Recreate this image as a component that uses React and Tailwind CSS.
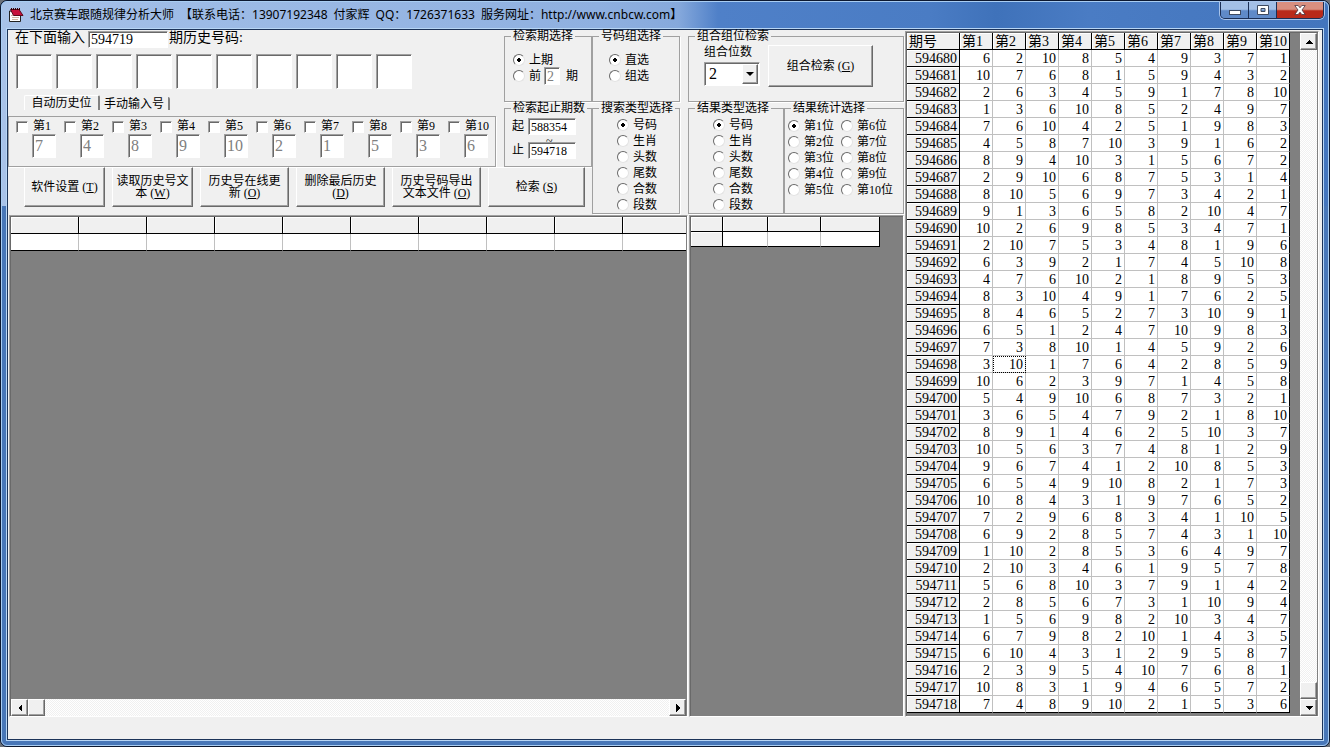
import React from 'react';
import clsx from 'clsx';

const SUNKEN = 'border border-t-[#a0a0a0] border-l-[#a0a0a0] border-r-white border-b-white shadow-[inset_1px_1px_0_#696969]';
const RAISED = 'bg-[#f0f0f0] border border-t-white border-l-white border-r-[#696969] border-b-[#696969] shadow-[inset_-1px_-1px_0_#a0a0a0]';
const TRACK = 'bg-[repeating-conic-gradient(#ffffff_0_25%,#f0f0f0_0_50%)] bg-[length:2px_2px]';

const FIRST_ISSUE = 594680;
const HISTORY = `
6 2 10 8 5 4 9 3 7 1
10 7 6 8 1 5 9 4 3 2
2 6 3 4 5 9 1 7 8 10
1 3 6 10 8 5 2 4 9 7
7 6 10 4 2 5 1 9 8 3
4 5 8 7 10 3 9 1 6 2
8 9 4 10 3 1 5 6 7 2
2 9 10 6 8 7 5 3 1 4
8 10 5 6 9 7 3 4 2 1
9 1 3 6 5 8 2 10 4 7
10 2 6 9 8 5 3 4 7 1
2 10 7 5 3 4 8 1 9 6
6 3 9 2 1 7 4 5 10 8
4 7 6 10 2 1 8 9 5 3
8 3 10 4 9 1 7 6 2 5
8 4 6 5 2 7 3 10 9 1
6 5 1 2 4 7 10 9 8 3
7 3 8 10 1 4 5 9 2 6
3 10 1 7 6 4 2 8 5 9
10 6 2 3 9 7 1 4 5 8
5 4 9 10 6 8 7 3 2 1
3 6 5 4 7 9 2 1 8 10
8 9 1 4 6 2 5 10 3 7
10 5 6 3 7 4 8 1 2 9
9 6 7 4 1 2 10 8 5 3
6 5 4 9 10 8 2 1 7 3
10 8 4 3 1 9 7 6 5 2
7 2 9 6 8 3 4 1 10 5
6 9 2 8 5 7 4 3 1 10
1 10 2 8 5 3 6 4 9 7
2 10 3 4 6 1 9 5 7 8
5 6 8 10 3 7 9 1 4 2
2 8 5 6 7 3 1 10 9 4
1 5 6 9 8 2 10 3 4 7
6 7 9 8 2 10 1 4 3 5
6 10 4 3 1 2 9 5 8 7
2 3 9 5 4 10 7 6 8 1
10 8 3 1 9 4 6 5 7 2
7 4 8 9 10 2 1 5 3 6`
  .trim()
  .split('\n')
  .map((line, i) => ({ issue: FIRST_ISSUE + i, balls: line.split(' ') }));

const POSITIONS = ['第1', '第2', '第3', '第4', '第5', '第6', '第7', '第8', '第9', '第10'];
const LATEST = HISTORY[HISTORY.length - 1].balls;
const KINDS = ['号码', '生肖', '头数', '尾数', '合数', '段数'];
const FOCUSED = { issue: 594698, col: 1 };
const TITLE = ['北京赛车跟随规律分析大师', '【联系电话：13907192348', '付家辉', 'QQ：1726371633', '服务网址：http://www.cnbcw.com】'];

const ACTIONS = [
  { lines: ['软件设置'], hotkey: 'T', width: 'w-[81px]' },
  { lines: ['读取历史号文', '本'], hotkey: 'W', width: 'w-[81px]' },
  { lines: ['历史号在线更', '新'], hotkey: 'O', width: 'w-[89px]' },
  { lines: ['删除最后历史', ''], hotkey: 'D', width: 'w-[89px]' },
  { lines: ['历史号码导出', '文本文件'], hotkey: 'O', width: 'w-[89px]' },
  { lines: ['检索'], hotkey: 'S', width: 'w-[97px]' },
];

function Group({ title, className, bodyClass, children }) {
  return (
    <fieldset className={clsx('min-w-0 border border-[#a0a0a0] shadow-[1px_1px_0_#fff]', className)}>
      <legend className="ml-1.5 px-0.5 h-3 leading-3 whitespace-nowrap">{title}</legend>
      <div className={bodyClass}>{children}</div>
    </fieldset>
  );
}

function Radio({ name, label, checked }) {
  return (
    <label className="flex items-center gap-1 h-4 leading-4 whitespace-nowrap">
      <input
        type="radio"
        name={name}
        defaultChecked={checked}
        className="appearance-none shrink-0 w-3 h-3 rounded-full bg-white border border-t-[#696969] border-l-[#696969] border-r-[#e3e3e3] border-b-[#e3e3e3] checked:bg-[radial-gradient(circle,#000_2px,#fff_2px)]"
      />
      {label}
    </label>
  );
}

function Field({ label, className, ...rest }) {
  return <input type="text" aria-label={label} className={clsx('bg-white rounded-none px-0.5 outline-none', SUNKEN, className)} {...rest} />;
}

function PushButton({ lines, hotkey, className }) {
  return (
    <button type="button" className={clsx('leading-3 text-center whitespace-nowrap', RAISED, className)}>
      {lines.map((l, i) => (
        <span key={i} className="block">
          {l}
          {i === lines.length - 1 && <> (<u>{hotkey}</u>)</>}
        </span>
      ))}
    </button>
  );
}

function ScrollButton({ label, path }) {
  return (
    <button type="button" aria-label={label} className={clsx('w-[17px] h-[17px] shrink-0 grid place-items-center', RAISED)}>
      <svg width="8" height="8" viewBox="0 0 8 8" shapeRendering="crispEdges"><path d={path} fill="#000" /></svg>
    </button>
  );
}

function TitleBar() {
  return (
    <header className="flex items-start h-[26px] text-black">
      <svg className="mt-[5px] ml-[2px] shrink-0" width="16" height="16" viewBox="0 0 16 16">
        <path d="M1.500 4V14.500H12.500V8L10 5Z" fill="#fff" stroke="#222" />
        <path d="M2.500 2.500H11L15 8.500H5.500Z" fill="#c8103a" stroke="#5a0a1c" />
        <path d="M3.500 1v2M5.500 1v2M7.500 1v2M9.500 1v2M11.500 1v2" stroke="#300" />
        <path d="M4 10.500h7M4 12.500h6M3 8.500h2" stroke="#d0b4a0" />
      </svg>
      <h1 className="flex-1 flex gap-1.5 ml-[6px] mt-[5px] h-4 leading-4 text-[12px] whitespace-nowrap font-['Noto_Sans','Noto_Sans_CJK_SC',sans-serif]">
        {TITLE.map((t) => <span key={t}>{t}</span>)}
      </h1>
      <div className="flex h-[17px] border border-t-0 border-[#1b2f55] rounded-b-[5px] overflow-hidden shadow-[0_0_0_1px_#a9c4ea]">
        <button type="button" aria-label="最小化" className="w-7 grid place-items-center border-r border-[#1b2f55] bg-linear-to-b from-[#a3bfe6] from-45% to-[#5f8ac8] to-55%">
          <svg width="12" height="10" viewBox="0 0 12 10"><rect x="0.5" y="5.5" width="11" height="4" fill="#fff" stroke="#3e4a60" /></svg>
        </button>
        <button type="button" aria-label="最大化" className="w-7 grid place-items-center border-r border-[#1b2f55] bg-linear-to-b from-[#a3bfe6] from-45% to-[#5f8ac8] to-55%">
          <svg width="12" height="10" viewBox="0 0 12 10"><path d="M.5.5h11v9H.5zM4 3.5v3h4v-3z" fill="#fff" fillRule="evenodd" stroke="#3e4a60" /></svg>
        </button>
        <button type="button" aria-label="关闭" className="w-[46px] grid place-items-center bg-linear-to-b from-[#d98f80] from-45% to-[#b92a1a] to-55%">
          <svg width="12" height="10" viewBox="0 0 12 10"><path d="M.8.5h3.400L6 2.800 7.800.5h3.400L8 5l3.200 4.500H7.800L6 7.200 4.200 9.500H.8L4 5Z" fill="#fff" stroke="#4a3440" strokeWidth=".8" /></svg>
        </button>
      </div>
    </header>
  );
}

function EntryPanel() {
  return (
    <div className="flex-1 min-w-0">
      <div className="flex h-[18px] pl-[7px] pt-px text-[14px] leading-[14px] whitespace-nowrap">
        <label htmlFor="issue">在下面输入</label>
        <Field id="issue" defaultValue="594719" className="w-20 h-[17px] ml-[3px] mr-px" />
        期历史号码:
      </div>
      <div className="flex gap-1 pl-2 mt-[6px]">
        {POSITIONS.map((p) => <Field key={p} label={p} className="w-9 h-[35px]" />)}
      </div>
      <div role="tablist" className="flex items-end h-[15px] mt-[6px] pl-4 leading-[14px] whitespace-nowrap">
        <button type="button" role="tab" aria-selected="true" className="h-[15px] w-[76px] border-t border-l border-t-white border-l-white border-r-2 border-r-[#808080] rounded-t-[2px]">自动历史位</button>
        <button type="button" role="tab" aria-selected="false" className="h-[13px] w-[70px] border-r-2 border-r-[#808080] rounded-tr-[2px]">手动输入号</button>
      </div>
      <div className="flex mt-[6px] w-[488px] h-[51px] pl-[7px] pt-[2px] border border-[#a0a0a0] shadow-[1px_1px_0_#fff]">
        {POSITIONS.map((p, i) => (
          <div key={p} className="w-12 shrink-0">
            <label className="flex items-center gap-[5px] h-[15px] leading-[15px] whitespace-nowrap">
              <input type="checkbox" className={clsx('appearance-none shrink-0 w-3 h-3 bg-white', SUNKEN)} />
              {p}
            </label>
            <Field label={`${p}号`} disabled defaultValue={LATEST[i]} className="block ml-4 w-6 h-6 text-base leading-5 text-[#808080]" />
          </div>
        ))}
      </div>
    </div>
  );
}

function Controls() {
  return (
    <div className="flex h-[185px] text-[12px]">
      <div className="flex-1 min-w-0">
        <div className="flex">
          <EntryPanel />
          <div className="w-[88px] shrink-0">
            <Group title="检索期选择" className="h-[72px]" bodyClass="pl-2 pt-[10px]">
              <Radio name="period" label="上期" checked />
              <div className="flex items-center h-4">
                <Radio name="period" label="前" />
                <Field label="前几期" disabled defaultValue="2" className="w-4 h-[18px] ml-[3px] mr-[6px] text-[14px] text-[#808080]" />
                期
              </div>
            </Group>
            <Group title="检索起止期数" className="h-[65px]" bodyClass="pl-[7px] pt-1">
              <div className="flex gap-1">
                <label htmlFor="from" className="leading-4">起</label>
                <Field id="from" defaultValue="588354" className="w-12 h-[17px]" />
              </div>
              <div className="h-[7px] leading-[12px] pl-[34px]">~</div>
              <div className="flex gap-1">
                <label htmlFor="to" className="leading-4">止</label>
                <Field id="to" defaultValue="594718" className="w-12 h-[17px]" />
              </div>
            </Group>
          </div>
        </div>
        <div className="flex gap-[7px] pl-4">
          {ACTIONS.map((a) => (
            <PushButton key={a.lines[0]} lines={a.lines} hotkey={a.hotkey} className={clsx('h-10 shrink-0', a.width)} />
          ))}
        </div>
      </div>

      <div className="w-[88px] mr-2 shrink-0">
        <Group title="号码组选择" className="h-[72px]" bodyClass="pl-4 pt-[10px]">
          <Radio name="match" label="直选" checked />
          <Radio name="match" label="组选" />
        </Group>
        <Group title="搜索类型选择" className="h-[112px]" bodyClass="pl-6 pt-[3px]">
          {KINDS.map((k, i) => <Radio key={k} name="search-kind" label={k} checked={i === 0} />)}
        </Group>
      </div>

      <div className="w-[216px] shrink-0">
        <Group title="组合组位检索" className="h-[72px]" bodyClass="flex gap-2 pl-[15px] pt-[3px]">
          <div>
            <label htmlFor="combo" className="block h-[17px] leading-[14px]">组合位数</label>
            <div className="relative w-14">
              <select id="combo" defaultValue="2" className={clsx('appearance-none block w-14 h-6 bg-white pl-1 text-base leading-5 rounded-none', SUNKEN)}>
                {[2, 3, 4, 5].map((n) => <option key={n}>{n}</option>)}
              </select>
              <span className={clsx('absolute right-[2px] top-[2px] w-4 h-5 grid place-items-center pointer-events-none', RAISED)}>
                <svg width="8" height="4" viewBox="0 0 8 4"><path d="M0 0h8L4 4Z" /></svg>
              </span>
            </div>
          </div>
          <PushButton lines={['组合检索']} hotkey="G" className="w-[105px] h-[42px]" />
        </Group>
        <div className="flex">
          <Group title="结果类型选择" className="w-24 h-[112px]" bodyClass="pl-6 pt-[3px]">
            {KINDS.map((k, i) => <Radio key={k} name="result-kind" label={k} checked={i === 0} />)}
          </Group>
          <Group title="结果统计选择" className="flex-1 h-[112px]" bodyClass="grid grid-flow-col grid-rows-5 grid-cols-[53px_1fr] pl-[3px] pt-1">
            {POSITIONS.map((p, i) => <Radio key={p} name="stat-pos" label={`${p}位`} checked={i === 0} />)}
          </Group>
        </div>
      </div>
    </div>
  );
}

const HEAD_CELL = 'bg-[#f0f0f0] border-r border-b border-black shadow-[inset_1px_1px_0_#fff]';

function ResultGrid() {
  return (
    <div className={clsx('flex-1 min-w-0 flex flex-col pt-px px-px bg-[#808080]', SUNKEN)}>
      <div className="flex-1 overflow-hidden">
        <table aria-label="检索结果" className="table-fixed w-[680px] border-separate border-spacing-0">
          <thead>
            <tr className="h-[17px]">{POSITIONS.map((p) => <th key={p} className={clsx('p-0', HEAD_CELL)} />)}</tr>
          </thead>
          <tbody>
            <tr className="h-[17px]">{POSITIONS.map((p) => <td key={p} className="p-0 bg-white border-r border-r-[#c0c0c0] border-b border-b-black" />)}</tr>
          </tbody>
        </table>
      </div>
      <div className={clsx('flex h-[17px]', TRACK)}>
        <ScrollButton label="向左" path="M6 0v8L2 4Z" />
        <div className={clsx('w-[17px]', RAISED)} />
        <div className="flex-1" />
        <ScrollButton label="向右" path="M2 0v8L6 4Z" />
      </div>
    </div>
  );
}

function SummaryGrid() {
  return (
    <div className={clsx('w-[215px] shrink-0 p-px bg-[#808080]', SUNKEN)}>
      <table aria-label="统计结果" className="table-fixed w-[189px] border-separate border-spacing-0">
        <colgroup>
          <col className="w-8" />
          <col className="w-[45px]" />
          <col className="w-[53px]" />
          <col className="w-[59px]" />
        </colgroup>
        <thead>
          <tr className="h-[15px]">{[0, 1, 2, 3].map((c) => <th key={c} className={clsx('p-0', HEAD_CELL)} />)}</tr>
        </thead>
        <tbody>
          <tr className="h-[15px]">
            <th className={clsx('p-0', HEAD_CELL)} />
            {[1, 2, 3].map((c) => <td key={c} className="p-0 bg-white border-r border-r-[#c0c0c0] border-b border-b-black last:border-r-black" />)}
          </tr>
        </tbody>
      </table>
    </div>
  );
}

function HistoryPanel() {
  return (
    <div className={clsx('w-[414px] shrink-0 mt-px flex pt-px px-px bg-[#808080]', SUNKEN)}>
      <div className="flex-1">
        <table aria-label="历史号码" className="table-fixed w-[383px] border-separate border-spacing-0 text-[14px] leading-[15px]">
          <colgroup>
            <col className="w-[53px]" />
            {POSITIONS.map((p) => <col key={p} className="w-[33px]" />)}
          </colgroup>
          <thead>
            <tr>
              {['期号', ...POSITIONS].map((h) => (
                <th key={h} scope="col" className={clsx('h-[17px] p-0 pt-px pl-[2px] text-left font-normal whitespace-nowrap', HEAD_CELL)}>{h}</th>
              ))}
            </tr>
          </thead>
          <tbody>
            {HISTORY.map((row) => (
              <tr key={row.issue} className="group">
                <th scope="row" className={clsx('h-[17px] p-0 pt-px pr-[2px] text-right font-normal', HEAD_CELL)}>{row.issue}</th>
                {row.balls.map((n, c) => (
                  <td
                    key={c}
                    className={clsx(
                      'h-[17px] p-0 pt-px pr-[2px] text-right bg-white border-r border-b border-[#c0c0c0] last:border-r-black group-last:border-b-black',
                      row.issue === FOCUSED.issue && c === FOCUSED.col && 'outline-1 outline-dotted -outline-offset-1 outline-black',
                    )}
                  >
                    {n}
                  </td>
                ))}
              </tr>
            ))}
          </tbody>
        </table>
      </div>
      <div className={clsx('w-[17px] flex flex-col', TRACK)}>
        <ScrollButton label="向上" path="M0 6h8L4 2Z" />
        <div className="flex-1" />
        <div className={clsx('h-[17px]', RAISED)} />
        <ScrollButton label="向下" path="M0 2h8L4 6Z" />
      </div>
    </div>
  );
}

export default function App() {
  return (
    <div className="min-h-screen flex flex-col bg-[#6b7078] text-black font-['Liberation_Serif','Noto_Sans_CJK_SC',serif]">
      <div className="flex-1 flex flex-col rounded-[7px] border border-[#0c1830] bg-[#4877b8]">
        <div className="flex-1 flex flex-col rounded-[6px] border border-[#a9cdf2] px-1 pb-1 bg-[linear-gradient(90deg,#a8c2e8_0,#9dbbe6_15%,#8fb0e0_45%,#86a9dc_51%,#4f80c8_54%,#4a7cc4_70%,#3f72ba_75%,#4a7cc4_82%,#4375bd_100%)] bg-[length:100%_204px] bg-no-repeat">
          <TitleBar />
          <div className="flex-1 flex flex-col border border-[#b8d6f5]">
            <main className="flex-1 flex flex-col border border-[#1c3358] bg-[#f0f0f0]">
              <div className="flex-1 flex pr-[3px]">
                <div className="flex-1 min-w-0 flex flex-col mr-px">
                  <Controls />
                  <div className="flex-1 flex gap-px pl-px">
                    <ResultGrid />
                    <SummaryGrid />
                  </div>
                </div>
                <HistoryPanel />
              </div>
              <footer className="h-[22px]" />
            </main>
          </div>
        </div>
      </div>
    </div>
  );
}
